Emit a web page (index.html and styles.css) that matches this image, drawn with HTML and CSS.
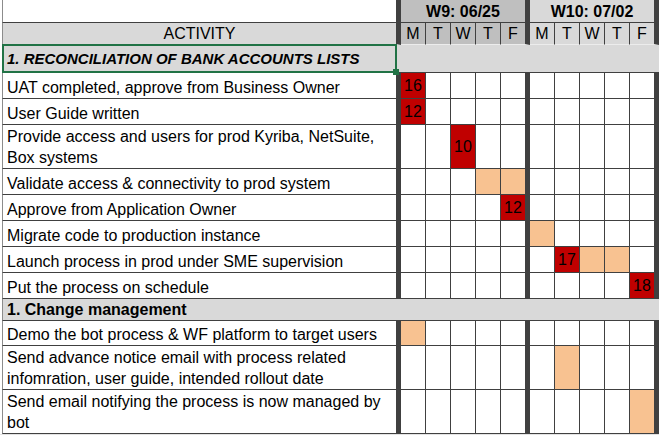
FILE: index.html
```html
<!DOCTYPE html>
<html>
<head>
<meta charset="utf-8">
<title>Gantt</title>
<link rel="stylesheet" href="styles.css">
</head>
<body>
<div class="sheet">
  <div class="row h1">
    <div class="act top"></div>
    <div class="wk dark">W9: 06/25</div>
    <div class="wk light">W10: 07/02</div>
  </div>
  <div class="row h2">
    <div class="act hdr">ACTIVITY</div>
    <div class="d dh dark">M</div><div class="d dh dark">T</div><div class="d dh dark">W</div><div class="d dh dark">T</div><div class="d dh dark f">F</div>
    <div class="d dh light">M</div><div class="d dh light">T</div><div class="d dh light">W</div><div class="d dh light">T</div><div class="d dh light f">F</div>
  </div>
  <div class="row s1">
    <div class="sec sec-italic">1. RECONCILIATION OF BANK ACCOUNTS LISTS</div>
  </div>
  <div class="row r1">
    <div class="act">UAT completed, approve from Business Owner</div>
    <div class="d red">16</div><div class="d"></div><div class="d"></div><div class="d"></div><div class="d f"></div>
    <div class="d"></div><div class="d"></div><div class="d"></div><div class="d"></div><div class="d f"></div>
  </div>
  <div class="row r1">
    <div class="act">User Guide written</div>
    <div class="d red">12</div><div class="d"></div><div class="d"></div><div class="d"></div><div class="d f"></div>
    <div class="d"></div><div class="d"></div><div class="d"></div><div class="d"></div><div class="d f"></div>
  </div>
  <div class="row r2">
    <div class="act">Provide access and users for prod Kyriba, NetSuite, Box systems</div>
    <div class="d"></div><div class="d"></div><div class="d red">10</div><div class="d"></div><div class="d f"></div>
    <div class="d"></div><div class="d"></div><div class="d"></div><div class="d"></div><div class="d f"></div>
  </div>
  <div class="row r1">
    <div class="act">Validate access &amp; connectivity to prod system</div>
    <div class="d"></div><div class="d"></div><div class="d"></div><div class="d peach"></div><div class="d f peach"></div>
    <div class="d"></div><div class="d"></div><div class="d"></div><div class="d"></div><div class="d f"></div>
  </div>
  <div class="row r1">
    <div class="act">Approve from Application Owner</div>
    <div class="d"></div><div class="d"></div><div class="d"></div><div class="d"></div><div class="d f red">12</div>
    <div class="d"></div><div class="d"></div><div class="d"></div><div class="d"></div><div class="d f"></div>
  </div>
  <div class="row r1">
    <div class="act">Migrate code to production instance</div>
    <div class="d"></div><div class="d"></div><div class="d"></div><div class="d"></div><div class="d f"></div>
    <div class="d peach"></div><div class="d"></div><div class="d"></div><div class="d"></div><div class="d f"></div>
  </div>
  <div class="row r1">
    <div class="act">Launch process in prod under SME supervision</div>
    <div class="d"></div><div class="d"></div><div class="d"></div><div class="d"></div><div class="d f"></div>
    <div class="d"></div><div class="d red">17</div><div class="d peach"></div><div class="d peach"></div><div class="d f"></div>
  </div>
  <div class="row r1">
    <div class="act">Put the process on schedule</div>
    <div class="d"></div><div class="d"></div><div class="d"></div><div class="d"></div><div class="d f"></div>
    <div class="d"></div><div class="d"></div><div class="d"></div><div class="d"></div><div class="d f red">18</div>
  </div>
  <div class="row s2">
    <div class="sec">1. Change management</div>
  </div>
  <div class="row r3">
    <div class="act">Demo the bot process &amp; WF platform to target users</div>
    <div class="d peach"></div><div class="d"></div><div class="d"></div><div class="d"></div><div class="d f"></div>
    <div class="d"></div><div class="d"></div><div class="d"></div><div class="d"></div><div class="d f"></div>
  </div>
  <div class="row r2">
    <div class="act">Send advance notice email with process related infomration, user guide, intended rollout date</div>
    <div class="d"></div><div class="d"></div><div class="d"></div><div class="d"></div><div class="d f"></div>
    <div class="d"></div><div class="d peach"></div><div class="d"></div><div class="d"></div><div class="d f"></div>
  </div>
  <div class="row r2">
    <div class="act">Send email notifying the process is now managed by bot</div>
    <div class="d"></div><div class="d"></div><div class="d"></div><div class="d"></div><div class="d f"></div>
    <div class="d"></div><div class="d"></div><div class="d"></div><div class="d"></div><div class="d f peach"></div>
  </div>
  <div class="selection"><span class="handle"></span></div>
</div>
<div class="below"></div>
</body>
</html>
```

FILE: styles.css
```css
* {
  box-sizing: border-box;
}

body {
  margin: 0;
  background: #ffffff;
  font-family: "Liberation Sans", Arial, sans-serif;
  font-size: 16px;
  color: #000000;
}

.sheet {
  position: relative;
  margin-left: 2px;
}

.row {
  display: grid;
  grid-template-columns: 399px repeat(4, 25px) 29px repeat(4, 25px) 29px;
}

.h1 { height: 23px; }
.h2 { height: 22px; }
.s1 { height: 28px; }
.r1 { height: 26px; }
.r2 { height: 44px; }
.r3 { height: 25px; }
.s2 { height: 22px; }

.act {
  display: flex;
  align-items: flex-end;
  padding-left: 4px;
  line-height: 21px;
  border-left: 1px solid #8c8c8c;
  border-right: 5px solid #404040;
  border-bottom: 1px solid #404040;
  background: #ffffff;
}

.act.top {
  background: #ffffff;
}

.act.hdr {
  justify-content: center;
  padding-left: 0;
  background: #d9d9d9;
  border-bottom-color: #ececec;
}

.wk {
  grid-column: span 5;
  display: flex;
  align-items: flex-end;
  justify-content: center;
  line-height: 21px;
  font-weight: bold;
  border-right: 5px solid #404040;
  border-bottom: 1px solid #404040;
}

.dark { background: #bfbfbf; }
.light { background: #d9d9d9; }

.d {
  display: flex;
  align-items: center;
  justify-content: center;
  line-height: 21px;
  border-right: 1px solid #404040;
  border-bottom: 1px solid #404040;
}

.d.f {
  border-right-width: 5px;
}

.dh {
  align-items: flex-end;
  border-bottom-color: #ececec;
}

.red { background: #c00000; }
.peach { background: #f8c291; }

.sec {
  grid-column: 1 / -1;
  display: flex;
  align-items: flex-end;
  padding-left: 4px;
  line-height: 21px;
  font-weight: bold;
  background: #d9d9d9;
  border-left: 1px solid #8c8c8c;
  border-bottom: 1px solid #404040;
}

.sec-italic {
  align-items: center;
  font-style: italic;
  font-size: 15px;
}

.selection {
  position: absolute;
  left: 0;
  top: 44px;
  width: 395px;
  height: 29px;
  border: 2px solid #217346;
}

.handle {
  position: absolute;
  right: -4px;
  bottom: -4px;
  width: 6px;
  height: 6px;
  background: #217346;
}

.below {
  height: 20px;
  background: #e3e3e3;
}
```
